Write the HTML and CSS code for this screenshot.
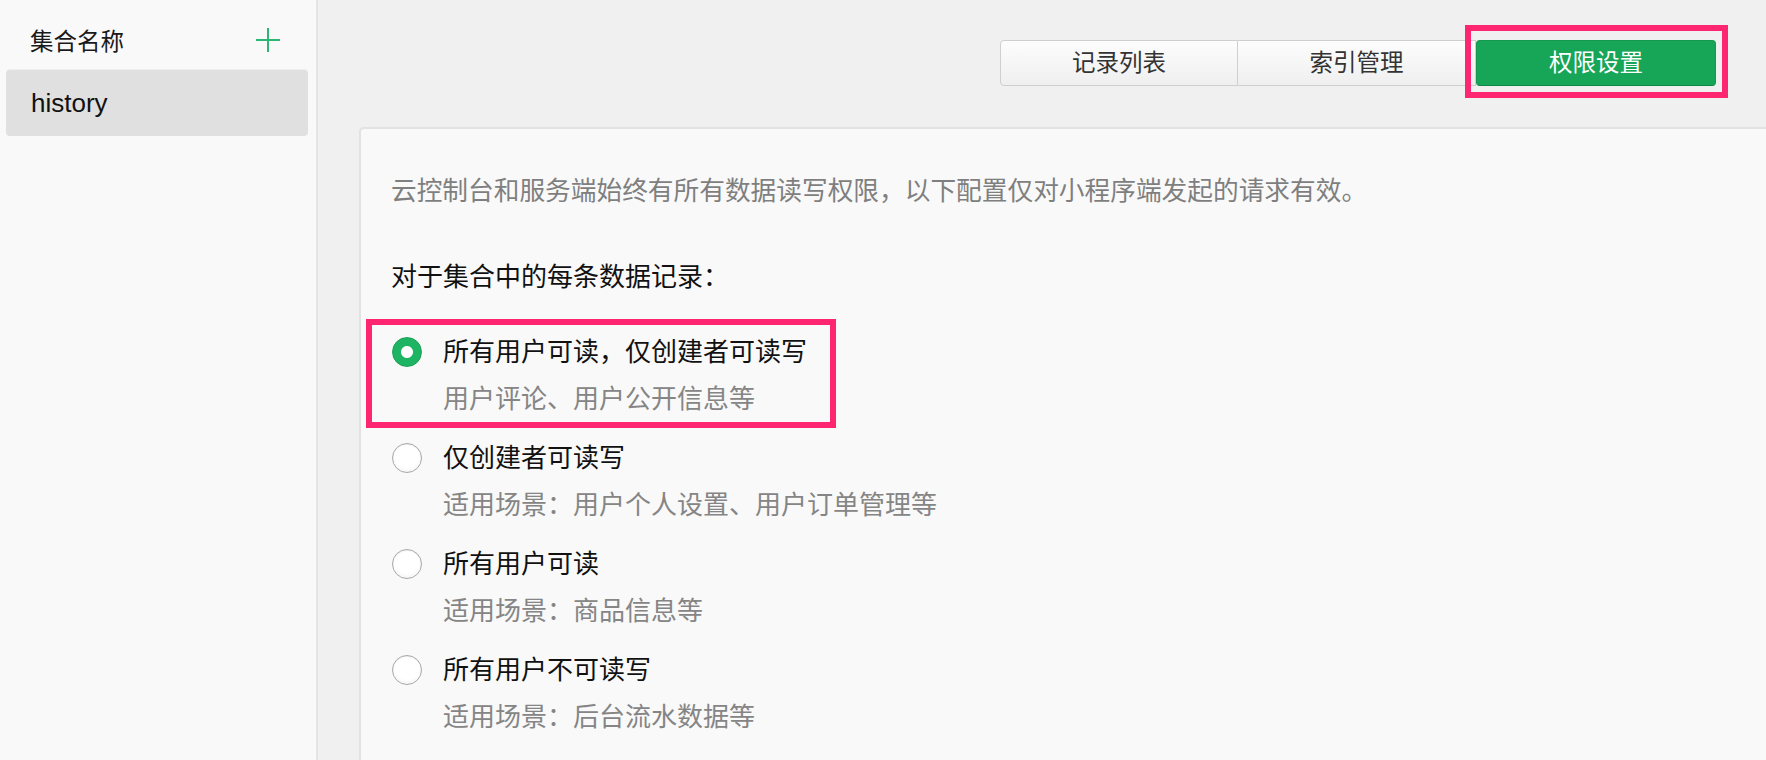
FILE: index.html
```html
<!DOCTYPE html>
<html lang="zh-CN">
<head>
<meta charset="utf-8">
<title>权限设置</title>
<link rel="stylesheet" href="styles.css">
</head>
<body>
<div class="app">
  <aside class="sidebar">
    <div class="side-head">
      <span class="side-title">集合名称</span>
      <svg class="plus" width="24" height="24" viewBox="0 0 24 24"><path d="M12 0V24M0 12H24" stroke="#2bb673" stroke-width="2" fill="none"/></svg>
    </div>
    <div class="coll-item">history</div>
  </aside>
  <main class="main">
    <div class="tabs">
      <div class="tab">记录列表</div>
      <div class="tab">索引管理</div>
      <div class="tab tab-active">权限设置<span class="mark mark-tab"></span></div>
    </div>
    <section class="card">
      <p class="desc">云控制台和服务端始终有所有数据读写权限，以下配置仅对小程序端发起的请求有效。</p>
      <p class="heading">对于集合中的每条数据记录：</p>
      <div class="options">
        <div class="option">
          <span class="radio radio-on"></span>
          <div class="opt-text">
            <div class="opt-title">所有用户可读，仅创建者可读写</div>
            <div class="opt-sub">用户评论、用户公开信息等</div>
          </div>
          <span class="mark mark-opt"></span>
        </div>
        <div class="option">
          <span class="radio"></span>
          <div class="opt-text">
            <div class="opt-title">仅创建者可读写</div>
            <div class="opt-sub">适用场景：用户个人设置、用户订单管理等</div>
          </div>
        </div>
        <div class="option">
          <span class="radio"></span>
          <div class="opt-text">
            <div class="opt-title">所有用户可读</div>
            <div class="opt-sub">适用场景：商品信息等</div>
          </div>
        </div>
        <div class="option">
          <span class="radio"></span>
          <div class="opt-text">
            <div class="opt-title">所有用户不可读写</div>
            <div class="opt-sub">适用场景：后台流水数据等</div>
          </div>
        </div>
      </div>
    </section>
  </main>
</div>
</body>
</html>
```

FILE: styles.css
```css
html, body {
  margin: 0;
  padding: 0;
  height: 100%;
  overflow: hidden;
}
body {
  font-family: "Liberation Sans", "Noto Sans CJK SC", sans-serif;
  color: #1a1a1a;
  background: #f0f0f0;
}
.app {
  display: flex;
  height: 760px;
}
.sidebar {
  width: 316px;
  flex: none;
  background: #f9f9f9;
  border-right: 2px solid #e4e4e4;
}
.side-head {
  height: 60px;
  padding: 10px 36px 0 30px;
  display: flex;
  align-items: center;
  justify-content: space-between;
}
.side-title {
  font-size: 23.5px;
  color: #1a1a1a;
}
.plus {
  display: block;
}
.coll-item {
  margin: 0 8px 0 6px;
  height: 66px;
  line-height: 66px;
  padding-left: 25px;
  font-size: 26px;
  background: #e0e0e0;
  border-radius: 4px;
  box-shadow: 0 -1px 0 rgba(0,0,0,0.04);
  color: #111;
}
.main {
  flex: 1;
  min-width: 0;
  padding-top: 40px;
  display: flex;
  flex-direction: column;
}
.tabs {
  display: flex;
  justify-content: flex-end;
  padding-right: 50px;
}
.tab {
  position: relative;
  width: 238px;
  height: 46px;
  box-sizing: border-box;
  line-height: 44px;
  text-align: center;
  font-size: 23.5px;
  color: #333;
  background: linear-gradient(#fdfdfd, #efefef);
  border: 1px solid #cfcfcf;
  border-left: none;
}
.tab:first-child {
  border-left: 1px solid #cfcfcf;
  border-radius: 4px 0 0 4px;
}
.tab-active {
  width: 240px;
  background: #17a557;
  border: 1px solid #15994f;
  border-bottom-color: #118544;
  border-radius: 4px;
  color: #fff;
}
.mark {
  position: absolute;
  border: 6px solid #fe2670;
  pointer-events: none;
}
.mark-tab {
  top: -16px;
  left: -12px;
  right: -13px;
  bottom: -13px;
}
.card {
  margin: 41px -20px -20px 41px;
  flex: 1;
  background: #f9f9f9;
  border: 2px solid #e2e2e2;
  border-radius: 5px;
  padding: 44px 0 0 30px;
}
.desc {
  margin: 0;
  font-size: 25.7px;
  line-height: 36px;
  color: #7f7f7f;
}
.heading {
  margin: 50px 0 39px;
  font-size: 26px;
  line-height: 36px;
  color: #111;
}
.options {
  display: flex;
  flex-direction: column;
  align-items: flex-start;
  gap: 23px;
}
.option {
  position: relative;
  display: flex;
  align-items: flex-start;
}
.radio {
  width: 30px;
  height: 30px;
  box-sizing: border-box;
  margin: 3px 21px 0 1px;
  border-radius: 50%;
  border: 1px solid #a9a9a9;
  background: radial-gradient(circle at 50% 40%, #ffffff 55%, #ececec 100%);
  box-shadow: inset 0 1px 1px rgba(0,0,0,0.08);
  flex: none;
}
.radio-on {
  border: 1px solid #1a9e55;
  background: radial-gradient(circle, #ffffff 0 5.5px, #1db463 6.5px);
  box-shadow: none;
}
.opt-text {
  display: flex;
  flex-direction: column;
  gap: 11px;
}
.opt-title {
  font-size: 26px;
  line-height: 36px;
  color: #111;
}
.opt-sub {
  font-size: 26px;
  line-height: 36px;
  color: #858585;
}
.mark-opt {
  top: -15px;
  left: -25px;
  right: -29px;
  bottom: -11px;
}
```
